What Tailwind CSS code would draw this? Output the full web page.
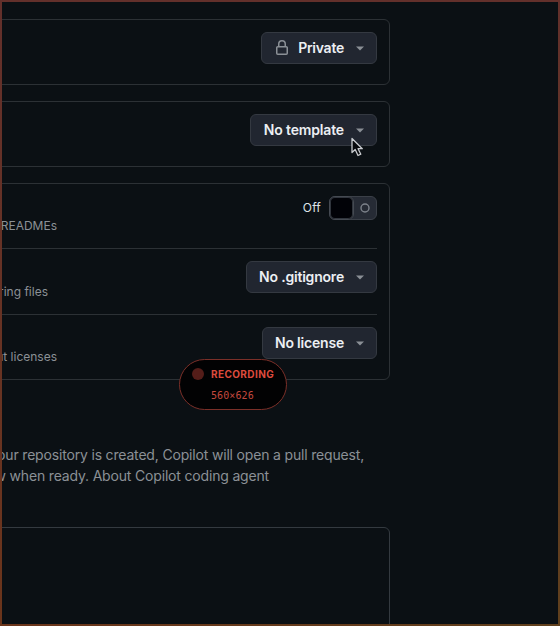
<!DOCTYPE html>
<html lang="en">
<head>
<meta charset="utf-8">
<title>New repository</title>
<script src="https://cdn.jsdelivr.net/npm/@tailwindcss/browser@4"></script>
</head>
<body class="bg-[#0b1014]">
<div class="relative h-[626px] w-[560px] overflow-hidden bg-[#0b1014] pt-[19px] font-['Inter',sans-serif] text-[#8b9096]">
  <main class="flex w-[390px] flex-col">
    <section class="-ml-2 flex h-[66px] items-start justify-end rounded-md border border-[#2c3135] pt-3 pr-3">
      <button class="flex h-8 w-[116px] items-center justify-end rounded-md border border-[#343941] bg-[#212630] pr-3 text-[14px] font-semibold text-[#eceff3]">
        <svg class="mr-2 h-4 w-4" viewBox="0 0 16 16" fill="#8b9096"><path d="M4 4a4 4 0 0 1 8 0v2h.25c.966 0 1.75.784 1.75 1.75v5.5A1.75 1.75 0 0 1 12.25 15h-8.5A1.75 1.75 0 0 1 2 13.250v-5.500C2 6.784 2.784 6 3.750 6H4Zm8.250 3.500h-8.500a.25.25 0 0 0-.25.25v5.500c0 .138.112.25.25.25h8.500a.25.25 0 0 0 .25-.25v-5.500a.25.25 0 0 0-.25-.25ZM10.500 6V4a2.500 2.500 0 1 0-5 0v2Z"/></svg>
        <span class="pb-px tracking-[-0.25px]">Private</span>
        <svg class="ml-3 h-[5px] w-2" viewBox="0 0 8 5" fill="#8b9096"><path d="M0 .5h8L4 4.500z"/></svg>
      </button>
    </section>

    <section class="mt-4 -ml-2 flex h-[66px] items-start justify-end rounded-md border border-[#2c3135] pt-3 pr-3">
      <button class="flex h-8 w-[127px] items-center justify-end rounded-md border border-[#343941] bg-[#212630] pr-3 text-[14px] font-semibold text-[#eceff3]">
        <span class="pb-px tracking-[-0.15px]">No template</span>
        <svg class="ml-3 h-[5px] w-2" viewBox="0 0 8 5" fill="#8b9096"><path d="M0 .5h8L4 4.500z"/></svg>
      </button>
    </section>

    <section class="mt-4 -ml-2 h-[197px] rounded-md border border-[#2c3135] pr-3">
      <div class="flex h-[65px] justify-between border-b border-[#2c3135] pt-3">
        <div class="flex w-[64px] justify-end pt-[21px] text-[12px] leading-[18px] whitespace-nowrap">READMEs</div>
        <div class="flex h-6 items-center">
          <span class="mr-2 text-[12px] tracking-[0.2px] text-[#dfe3e8]">Off</span>
          <div class="flex h-6 w-12 items-center rounded-md border border-[#3b4048] bg-[#262b35]">
            <div class="-ml-px h-6 w-[25px] shrink-0 rounded-md border-[1px] border-[#454a52] bg-[#010207] shadow-[inset_0_0_0_1px_#30353d]"></div>
            <svg class="ml-[6px] h-[10px] w-[10px]" viewBox="0 0 10 10" fill="none" stroke="#7d838b" stroke-width="1.400"><circle cx="5" cy="5" r="4"/></svg>
          </div>
        </div>
      </div>
      <div class="flex h-[66px] justify-between border-b border-[#2c3135] pt-3">
        <div class="flex w-[55px] justify-end pt-[22px] text-[12px] leading-[18px] whitespace-nowrap">ring files</div>
        <button class="flex h-8 w-[131px] items-center justify-end rounded-md border border-[#343941] bg-[#212630] pr-3 text-[14px] font-semibold text-[#eceff3]">
          <span class="pb-px tracking-[-0.2px]">No .gitignore</span>
          <svg class="ml-3 h-[5px] w-2" viewBox="0 0 8 5" fill="#8b9096"><path d="M0 .5h8L4 4.500z"/></svg>
        </button>
      </div>
      <div class="flex h-[64px] justify-between pt-3">
        <div class="flex w-[64px] justify-end pt-[21px] text-[12px] leading-[18px] whitespace-nowrap">ut licenses</div>
        <button class="flex h-8 w-[115px] items-center justify-end rounded-md border border-[#343941] bg-[#212630] pr-3 text-[14px] font-semibold text-[#eceff3]">
          <span class="pb-px tracking-[-0.2px]">No license</span>
          <svg class="ml-3 h-[5px] w-2" viewBox="0 0 8 5" fill="#8b9096"><path d="M0 .5h8L4 4.500z"/></svg>
        </button>
      </div>
    </section>

    <div class="mt-[64px] text-[14px] leading-[21px] tracking-[-0.175px] whitespace-nowrap">
      <p class="flex w-[364px] justify-end">our repository is created, Copilot will open a pull request,</p>
      <p class="flex w-[269px] justify-end">w when ready. About Copilot coding agent</p>
    </div>

    <section class="mt-[41px] -ml-2 h-[120px] rounded-md border border-[#343a40]"></section>
  </main>

  <svg class="absolute top-[137px] left-[350px] h-5 w-[15px]" viewBox="0 0 15 20"><path d="M2 1.500v14l3.200-3 2.800 6 2.800-1.300-2.700-5.500h4.200z" fill="#080a0d" stroke="#c9ccd0" stroke-width="1.300" stroke-linejoin="round"/></svg>

  <div class="absolute top-[359px] left-[179px] h-[51px] w-[108px] rounded-[26px] border border-[#7b2f28] bg-[#020203]">
    <div class="mt-[8px] ml-[12px] flex h-3 items-center">
      <span class="h-3 w-3 rounded-full bg-[#541d19]"></span>
      <span class="ml-[7px] text-[10px] font-bold tracking-[0.4px] text-[#dc4b3d]">RECORDING</span>
    </div>
    <div class="mt-[9px] ml-[31px] font-['DejaVu_Sans_Mono',monospace] text-[10px] leading-[14px] tracking-[0.1px] text-[#c4483d]">560×626</div>
  </div>

  <div class="absolute inset-x-0 top-0 h-[2px] bg-[#63302b]"></div>
  <div class="absolute inset-y-0 left-0 w-[2px] bg-linear-to-b from-[#63302b] to-[#6b351b]"></div>
  <div class="absolute inset-y-0 right-0 w-[2px] bg-linear-to-b from-[#63302b] to-[#60401d]"></div>
  <div class="absolute inset-x-0 bottom-0 h-[2px] bg-linear-to-r from-[#6b351b] to-[#60401d]"></div>
</div>
</body>
</html>
